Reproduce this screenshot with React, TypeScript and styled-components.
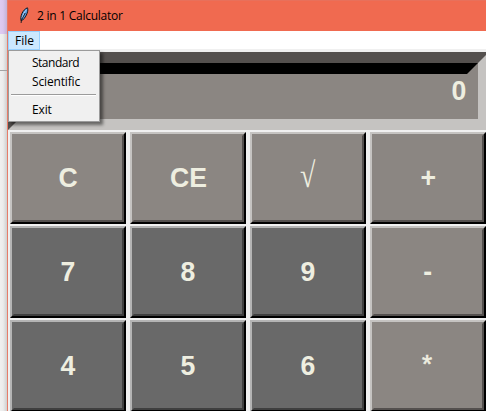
import React from "react";
import styled, { createGlobalStyle, css } from "styled-components";

const GlobalStyle = createGlobalStyle`
  * { box-sizing: border-box; }
  html, body { margin: 0; padding: 0; overflow: hidden; }
`;

const Screen = styled.div`
  display: flex;
  width: 486px;
  height: 411px;
  overflow: hidden;
  background: #f0f0f0;
  color: #000;
  font-family: "Open Sans", "Noto Sans", sans-serif;
  font-size: 12px;
`;

const Backdrop = styled.div`
  flex: 0 0 7px;
  display: flex;
  flex-direction: column;
  background: linear-gradient(to right, #f0f0f0 0, #ececec 3px, #cfcfcf 7px);
`;

const BackdropTitle = styled.div`
  height: 34px;
  background: linear-gradient(to right, #decbf2 0, #dac7ee 3px, #c4b2d6 7px);
`;

const BackdropLine = styled.div`
  height: 37px;
  border-bottom: 1px solid #a3a3a3;
`;

const Window = styled.div`
  position: relative;
  flex: 0 0 482px;
  border-left: 1px solid #e67c69;
`;

const TitleBar = styled.header`
  display: flex;
  align-items: center;
  height: 31px;
  padding: 0 0 1px 10px;
  background: #f06a50;
  border-top: 1px solid #e8705b;
`;

const Title = styled.span`
  margin-left: 7px;
  line-height: 16px;
  letter-spacing: -0.25px;
  white-space: nowrap;
`;

const MenuBar = styled.nav`
  height: 18px;
  background: #fff;
`;

const MenuButton = styled.div`
  width: 32px;
  height: 19px;
  padding-left: 6px;
  border: 1px solid #99d1ff;
  background: #cce8ff;
  line-height: 18px;
  position: relative;
`;

const Menu = styled.div`
  position: absolute;
  z-index: 2;
  left: 0;
  top: 50px;
  width: 92px;
  height: 72px;
  padding: 2px;
  border: 1px solid #9b9b9b;
  background: #f0f0f0;
  box-shadow: 3px 3px 3px rgba(0, 0, 0, 0.48);
`;

const MenuItem = styled.div<{ $tracking?: number }>`
  height: 19px;
  padding-left: 21px;
  line-height: 19px;
  letter-spacing: ${(p) => p.$tracking ?? -0.15}px;
`;

const Separator = styled.hr`
  height: 2px;
  margin: 3px 1px 4px 0;
  border: 0;
  border-top: 1px solid #9b9b9b;
  background: #fff;
`;

const keyFont = css`
  font-family: "Liberation Sans", Arial, sans-serif;
  font-size: 28px;
  font-weight: 700;
  color: #eeeee0;
`;

const Display = styled.div`
  width: 481px;
  height: 78px;
  margin-top: 3px;
  border: 11px solid;
  border-color: #54504e #c5c3c1 #c5c3c1 #54504e;
`;

const DisplayWell = styled.div`
  ${keyFont}
  height: 56px;
  border: 11px solid;
  border-color: #000 #8b8682 #8b8682 #000;
  background: #8b8682;
  text-align: right;
  line-height: 33px;
`;

const Value = styled.span`
  display: inline-block;
  transform: scaleX(0.95);
`;

const Keypad = styled.div`
  display: grid;
  grid-template-columns: repeat(4, 116px);
  grid-auto-rows: 92px;
  gap: 2px 4px;
  padding: 2px 0 0 2px;
`;

const Key = styled.div<{ $dark: boolean }>`
  border: 2px solid;
  border-color: ${(p) => (p.$dark ? "#b4b4b4" : "#c5c3c1")} #000 #000
    ${(p) => (p.$dark ? "#b4b4b4" : "#c5c3c1")};
  background: ${(p) => (p.$dark ? "#696969" : "#8b8682")};
`;

const KeyFace = styled.div<{ $dark: boolean }>`
  ${keyFont}
  display: flex;
  align-items: center;
  justify-content: center;
  height: 88px;
  border: 2px solid;
  border-color: transparent ${(p) => (p.$dark ? "#3f3f3f" : "#54504e")}
    ${(p) => (p.$dark ? "#3f3f3f" : "#54504e")} transparent;
`;

const Legend = styled.span<{ $label: string }>`
  line-height: 32px;
  transform: scaleX(0.95);
  ${(p) =>
    p.$label === "√" &&
    css`
      font-family: "Liberation Serif", serif;
      font-weight: 400;
      font-size: 35px;
      transform: translateY(-2px) scaleX(0.8);
    `}
  ${(p) =>
    p.$label === "*" &&
    css`
      font-size: 26px;
      font-weight: 400;
      -webkit-text-stroke: 0.6px #eeeee0;
      transform: translate(-1px, -2px);
    `}
`;

const Feather = () => (
  <svg width="12" height="17" viewBox="0 0 12 17">
    <path
      d="M3.1 13.8 C2 9.5 4.4 2.9 9.4 0.8 C10.8 3 8.7 9.4 4.7 13 Z"
      fill="#5d9ce0"
      stroke="#10151c"
      strokeWidth="1"
    />
    <path d="M8.6 2.6 C6 5 5.3 8 4.1 11" fill="none" stroke="#b4d6f6" strokeWidth="1" />
    <path d="M7.2 6 L3.4 13.2 L3.1 16" fill="none" stroke="#10151c" strokeWidth="0.9" />
  </svg>
);

const keys = ["C", "CE", "√", "+", "7", "8", "9", "-", "4", "5", "6", "*"];

export default function App() {
  return (
    <>
      <GlobalStyle />
      <Screen>
        <Backdrop>
          <BackdropTitle />
          <BackdropLine />
        </Backdrop>
        <Window>
          <TitleBar>
            <Feather />
            <Title>2 in 1 Calculator</Title>
          </TitleBar>
          <MenuBar>
            <MenuButton>File</MenuButton>
          </MenuBar>
          <Menu>
            <MenuItem $tracking={-0.5}>Standard</MenuItem>
            <MenuItem>Scientific</MenuItem>
            <Separator />
            <MenuItem>Exit</MenuItem>
          </Menu>
          <Display>
            <DisplayWell>
              <Value>0</Value>
            </DisplayWell>
          </Display>
          <Keypad>
            {keys.map((label) => {
              const dark = /\d/.test(label);
              return (
                <Key key={label} $dark={dark}>
                  <KeyFace $dark={dark}>
                    <Legend $label={label}>{label}</Legend>
                  </KeyFace>
                </Key>
              );
            })}
          </Keypad>
        </Window>
      </Screen>
    </>
  );
}
